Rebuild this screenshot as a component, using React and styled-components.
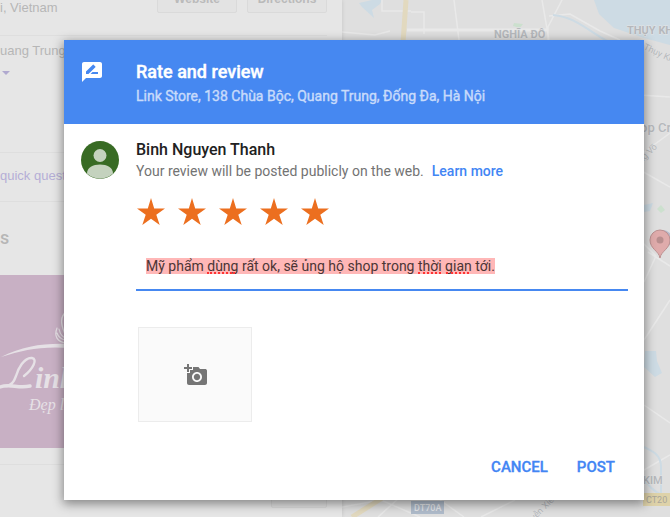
import React, { useState } from "react";
import styled, { createGlobalStyle } from "styled-components";

const GlobalStyle = createGlobalStyle`
  * { box-sizing: border-box; }
  body { margin: 0; background: #e6e6e6; font-family: Roboto, "Noto Sans", sans-serif; }
  button, input { font-family: inherit; }
`;

const Page = styled.div`
  position: relative;
  min-height: 100vh;
  overflow: hidden;
`;

const Backdrop = styled.div`
  position: absolute;
  inset: 0;
  display: flex;
  overflow: hidden;
`;

const Listing = styled.aside`
  flex: 0 0 342px;
  background: #e6e6e6;
  color: #b6b6b6;
  font: 13px/16px "Liberation Sans", sans-serif;
  box-shadow: 0 0 4px rgba(0, 0, 0, 0.12);
  z-index: 1;
`;

const Section = styled.section`
  height: ${(p) => p.$height}px;
  margin-right: 15px;
  padding-top: ${(p) => p.$top || 0}px;
  border-bottom: 1px solid #dedede;
  overflow: hidden;
`;

const TopRow = styled.div`
  display: flex;
  justify-content: space-between;
`;

const ButtonRow = styled.div`
  display: flex;
  gap: 10px;
  margin-top: -16px;
`;

const ListingButton = styled.button`
  width: 80px;
  height: 29px;
  padding: 0;
  border: 1px solid #dadada;
  border-radius: 2px;
  background: #e3e3e3;
  color: #bababa;
  font: bold 12px/16px "Liberation Sans", sans-serif;
`;

const Caret = styled.svg`
  display: block;
  margin: 12px 0 0 2px;
`;

const QuickLink = styled.a`
  color: #b5aed6;
  text-decoration: none;
`;

const ListingHeading = styled.h3`
  height: 73px;
  margin: 0;
  padding-top: 24px;
  font: 500 18px/24px Roboto, sans-serif;
`;

const StoreLogo = styled.svg`
  display: block;
  width: 100%;
  height: 173px;
  background: #c8b0c4;
`;

const BottomButton = styled(ListingButton)`
  display: block;
  width: 56px;
  margin: 14px 15px 0 auto;
`;

const MapPane = styled.div`
  flex: 1;
  min-width: 0;
  background: #dfdfdf;
`;

const MapDrawing = styled.svg`
  display: block;
  width: 100%;
  height: 100%;
  font-family: Roboto, sans-serif;
`;

const Overlay = styled.div`
  position: relative;
  display: flex;
  padding: 40px 26px 16px 64px;
  z-index: 2;
`;

const Dialog = styled.form`
  flex: 1;
  min-width: 0;
  background: #fff;
  box-shadow: 0 3px 10px 1px rgba(0, 0, 0, 0.42);
`;

const Header = styled.header`
  display: grid;
  grid-template-columns: 56px 1fr;
  padding: 20px 16px 17px;
  background: #4688f1;
  color: #fff;
`;

const HeaderIcon = styled.svg`
  width: 24px;
  height: 24px;
`;

const Title = styled.h1`
  margin: 0;
  font-size: 18px;
  line-height: 24px;
  font-weight: 500;
  -webkit-text-stroke: 0.4px;
`;

const Address = styled.p`
  margin: 2px 0 1px;
  color: #c8dbfb;
  font-size: 14px;
  line-height: 20px;
  font-weight: 400;
  -webkit-text-stroke: 0.4px;
`;

const Body = styled.div`
  display: grid;
  grid-template-columns: 56px 1fr;
  padding: 16px 16px 0;
`;

const Avatar = styled.svg`
  width: 40px;
  height: 40px;
`;

const Content = styled.div`
  min-width: 0;
`;

const UserName = styled.h2`
  margin: 0;
  color: #212121;
  font-size: 16px;
  line-height: 20px;
  font-weight: 500;
`;

const Notice = styled.p`
  margin: 1px 0 0;
  color: #737373;
  font-size: 14px;
  line-height: 20px;
`;

const LearnMore = styled.a`
  margin-left: 8px;
  color: #4285f4;
  font-weight: 500;
  text-decoration: none;
`;

const Stars = styled.div`
  display: flex;
  gap: 11px;
  margin-top: 16px;
`;

const StarLabel = styled.label`
  display: block;
  width: 30px;
  height: 30px;
  cursor: pointer;
`;

const StarInput = styled.input`
  position: absolute;
  opacity: 0;
  width: 1px;
  height: 1px;
  margin: 0;
`;

const StarShape = styled.svg`
  display: block;
  fill: ${(p) => (p.$on ? "#ec6f1f" : "#d5d5d5")};
`;

const Field = styled.div`
  position: relative;
  height: 50px;
  padding: 17px 10px 0;
  margin-top: 14px;
  border-bottom: 2px solid #4688f1;
`;

const ReviewInput = styled.input`
  display: block;
  field-sizing: content;
  max-width: 100%;
  height: 16px;
  padding: 0;
  border: 0;
  outline: 0;
  background: #ffb7b7;
  color: #4b3535;
  font-size: 14px;
  line-height: 16px;
`;

const SpellMark = styled.span`
  position: absolute;
  top: 31px;
  left: ${(p) => p.$left}px;
  width: ${(p) => p.$width}px;
  border-bottom: 2px dotted #f33;
  pointer-events: none;
`;

const AddPhoto = styled.button`
  display: flex;
  align-items: center;
  justify-content: center;
  width: 114px;
  height: 95px;
  margin: 36px 0 0 2px;
  padding: 0;
  border: 1px solid #ececec;
  background: #fafafa;
  color: #757575;
`;

const Actions = styled.footer`
  display: flex;
  justify-content: flex-end;
  gap: 13px;
  padding: 27px 21px 15px;
`;

const ActionButton = styled.button`
  height: 36px;
  padding: 0 8px;
  border: 0;
  background: transparent;
  color: #4285f4;
  font-size: 15px;
  line-height: 36px;
  font-weight: 500;
  text-transform: uppercase;
  -webkit-text-stroke: 0.3px;
`;

function StoreImage() {
  return (
    <StoreLogo viewBox="0 0 342 173" preserveAspectRatio="xMinYMin slice" aria-label="Link Store logo">
      <g fill="none" stroke="#e6e1e6" strokeLinecap="round">
        <path d="M64 39c-4 5-2 14 2 22M64 39c4 3 5 9 2 16" strokeWidth="1.4" />
        <path d="M57 53c-3 8 0 14 9 15M59 54c1 5 4 9 9 10M57 58c1 3 4 6 8 7" strokeWidth="1.2" />
        <path d="M24 101c9-7 14-17 8-18-8-1-14 11-16 18-2 6-5 10-10 10" strokeWidth="2.400" />
        <path d="M0 112c10-4 18 2 30-1" strokeWidth="3.400" />
        <path d="M38 103c-4 6-4 11-9 12" strokeWidth="0" />
      </g>
      <path d="M1 82c23-11 42-14 69-13v4c-30-2-46 2-69 9z" fill="#e6e1e6" />
      <g fill="#e6e1e6" fontFamily="Liberation Serif, serif" fontStyle="italic">
        <text x="35" y="113" fontSize="30" fontWeight="bold">ink</text>
        <text x="29" y="135" fontSize="16">Đẹp là</text>
      </g>
    </StoreLogo>
  );
}

function CityMap() {
  return (
    <MapPane>
      <MapDrawing viewBox="342 0 328 517" preserveAspectRatio="xMinYMin slice">
        <g fill="#cddbe4">
          <path d="M359 3l13-3h10l-2 4-8 6 2 8-12-11z" />
          <path d="M594 0h76v45l-26-7-30-10-15-14z" />
          <path d="M644 205l9-2-3 8-6 1z" />
          <path d="M645 351h11l1 10 5 12-7 4-11-10z" />
        </g>
        <g fill="none" stroke="#e9e9e9" strokeWidth="1.500">
          <path d="M382 0v11h29M383 11h22M411 12h13v22M454 0l5 40M342 32l33 3 15-4M542 0l7 40M562 0l-14 27v13M549 16l21-2 30 17 20 9" />
          <path d="M640 95l30 2M640 155l30-22M640 170l30 17M640 240l16 16-12 26M648 252l22 14M670 300l-26 40M644 405l26 18M644 470l26-15M342 507l39-7 39 17M378 517l21-19M440 500l24 17M515 500l-34 17" />
          <path d="M407 30h141" strokeWidth="3" />
        </g>
        <path d="M406 0l-3 43M352 517l35-22" fill="none" stroke="#e2d9bf" strokeWidth="5" />
        <path d="M553 15c22 2 34 15 54 26M644 447c8 4 17 7 17 20v33M644 478c4 8 9 13 18 17" fill="none" stroke="#cddbe4" strokeWidth="2" />
        <path d="M514 23l9 1-3 4-7-2z" fill="#cce0ce" />
        <path d="M657 209l4-4 4 5-4 3z" fill="#cce0ce" />
        <g fill="#b5b8bc" stroke="#e4e4e4" strokeWidth="1" paintOrder="stroke" fontWeight="700">
          <text x="494" y="38" fontSize="11">NGHĨA ĐÔ</text>
          <text x="627" y="34" fontSize="11">THỤY KHUÊ</text>
          <text x="640" y="132" fontSize="13" fontWeight="500">op Craft</text>
          <text x="643" y="484" fontSize="11" fontWeight="500">KIM</text>
          <text x="0" y="0" fontSize="9" fontWeight="400" transform="translate(643 49) rotate(25)">Thụy Khuê</text>
          <text x="0" y="0" fontSize="9" fontWeight="400" transform="translate(638 167) rotate(-45)">ảng Võ</text>
          <text x="0" y="0" fontSize="9" fontWeight="400" transform="translate(534 521) rotate(-45)">yễn Xiển</text>
        </g>
        <path d="M643 493h27v13h-27z" fill="#ded2a9" />
        <text x="646" y="503" fontSize="9" fill="#aaa69a">CT20</text>
        <path d="M411 501h33v13h-33z" fill="#b0bccb" />
        <text x="414" y="511" fontSize="9" fontWeight="500" fill="#e3e5e8">DT70A</text>
        <circle cx="663" cy="239" r="9" fill="#b7b9ca" />
        <path d="M660 258c-1-7-10-9-10-18a10 10 0 0 1 20 0c0 9-9 11-10 18z" fill="#dfabab" stroke="#bc9090" />
        <circle cx="660" cy="240" r="3.500" fill="#b88e8e" />
      </MapDrawing>
    </MapPane>
  );
}

function Background() {
  return (
    <Backdrop aria-hidden="true">
      <Listing>
        <Section $height={36}>
          <TopRow>
            <span>i, Vietnam</span>
            <ButtonRow>
              <ListingButton type="button" tabIndex={-1}>Website</ListingButton>
              <ListingButton type="button" tabIndex={-1}>Directions</ListingButton>
            </ButtonRow>
          </TopRow>
        </Section>
        <Section $height={117} $top={7}>
          uang Trung
          <Caret width="8" height="4"><path d="M0 0h8l-4 4z" fill="#b0a9cf" /></Caret>
        </Section>
        <Section $height={49} $top={15}>
          <QuickLink href="#questions" tabIndex={-1}>quick questions</QuickLink>
        </Section>
        <ListingHeading>s</ListingHeading>
        <StoreImage />
        <Section $height={17} />
        <BottomButton type="button" tabIndex={-1} />
      </Listing>
      <CityMap />
    </Backdrop>
  );
}

export default function App() {
  const [rating, setRating] = useState(5);
  const [review, setReview] = useState("Mỹ phẩm dùng rất ok, sẽ ủng hộ shop trong thời gian tới.");

  return (
    <Page>
      <GlobalStyle />
      <Background />
      <Overlay>
        <Dialog role="dialog" aria-labelledby="title" onSubmit={(e) => e.preventDefault()}>
          <Header>
            <HeaderIcon viewBox="0 0 24 24" fill="currentColor">
              <path d="M20 2H4c-1.100 0-2 .9-2 2v18l4-4h14c1.100 0 2-.9 2-2V4c0-1.100-.9-2-2-2zM6 14v-2.470l6.880-6.880c.2-.2.510-.2.710 0l1.770 1.770c.2.2.2.510 0 .710L8.470 14H6zm12 0h-7.500l2-2H18v2z" />
            </HeaderIcon>
            <div>
              <Title id="title">Rate and review</Title>
              <Address>Link Store, 138 Chùa Bộc, Quang Trung, Đống Đa, Hà Nội</Address>
            </div>
          </Header>
          <Body>
            <Avatar viewBox="0 0 40 40">
              <circle cx="20" cy="20" r="19" fill="#386b24" />
              <circle cx="20" cy="15.500" r="6.500" fill="#c4d2be" />
              <path d="M7 33.500c0-6 6-9 13-9s13 3 13 9a19 19 0 0 1-26 0z" fill="#c4d2be" />
            </Avatar>
            <Content>
              <UserName>Binh Nguyen Thanh</UserName>
              <Notice>
                Your review will be posted publicly on the web.
                <LearnMore href="#learn-more">Learn more</LearnMore>
              </Notice>
              <Stars role="radiogroup" aria-label="Rating">
                {[1, 2, 3, 4, 5].map((n) => (
                  <StarLabel key={n}>
                    <StarInput
                      type="radio"
                      name="rating"
                      aria-label={`${n} stars`}
                      checked={rating === n}
                      onChange={() => setRating(n)}
                    />
                    <StarShape $on={n <= rating} width="30" height="30" viewBox="0 0 30 30">
                      <path d="M15 1l3.200 10.400H29l-8.700 6.300L23.700 28 15 21.700 6.300 28l3.400-10.300L1 11.400h10.800z" />
                    </StarShape>
                  </StarLabel>
                ))}
              </Stars>
              <Field>
                <ReviewInput
                  type="text"
                  aria-label="Your review"
                  spellCheck={false}
                  value={review}
                  onChange={(e) => setReview(e.target.value)}
                />
                <SpellMark $left={71} $width={28} />
                <SpellMark $left={282} $width={23} />
                <SpellMark $left={310} $width={23} />
              </Field>
              <AddPhoto type="button" aria-label="Add photos">
                <svg width="24" height="24" viewBox="0 0 24 24" fill="currentColor">
                  <path d="M4 4V1h2v3h3v2H6v3H4V6H1V4h3zm3 6V7h3V4h5.500l1.500 2H22c1.100 0 2 .7 2 1.700V20c0 1.100-.9 2-2 2H6c-1.100 0-2-.9-2-2V10h3zm7 9c2.760 0 5-2.240 5-5s-2.240-5-5-5-5 2.240-5 5 2.240 5 5 5zm-3.200-5c0 1.770 1.430 3.200 3.200 3.200s3.200-1.430 3.200-3.200-1.430-3.200-3.200-3.200-3.200 1.430-3.200 3.200z" />
                </svg>
              </AddPhoto>
            </Content>
          </Body>
          <Actions>
            <ActionButton type="button">Cancel</ActionButton>
            <ActionButton type="submit">Post</ActionButton>
          </Actions>
        </Dialog>
      </Overlay>
    </Page>
  );
}
